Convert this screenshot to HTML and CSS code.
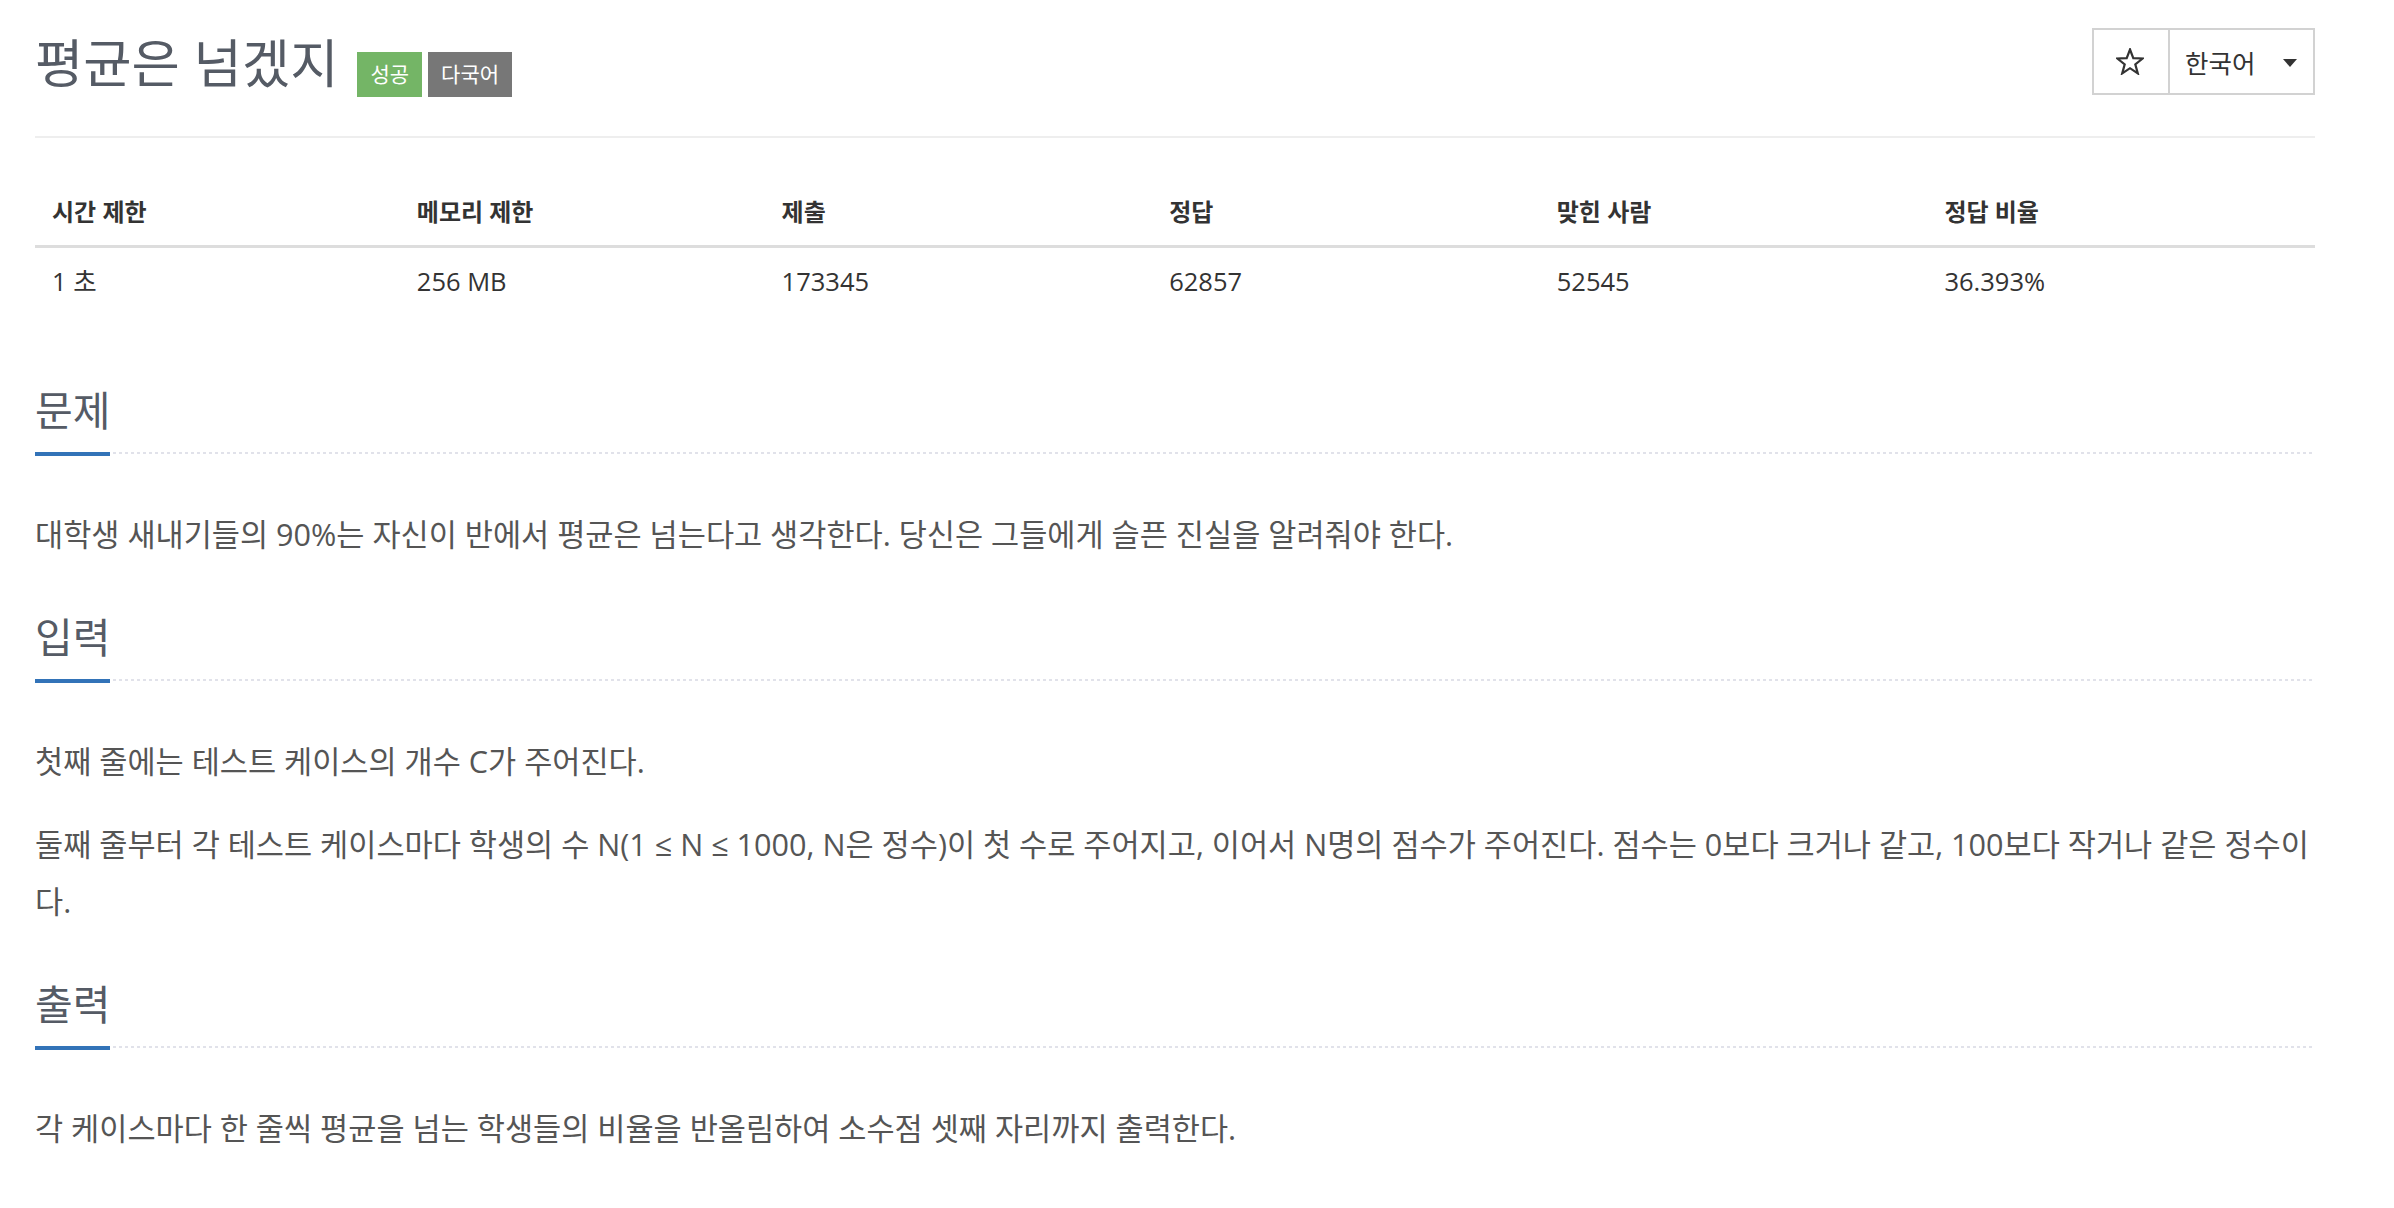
FILE: index.html
```html
<!DOCTYPE html>
<html lang="ko">
<head>
<meta charset="utf-8">
<title>평균은 넘겠지</title>
<link rel="stylesheet" href="styles.css">
</head>
<body>
<div class="page">
  <header class="page-header">
    <div class="title-row">
      <h1 class="title">평균은 넘겠지</h1>
      <span class="badge badge-success">성공</span>
      <span class="badge badge-default">다국어</span>
    </div>
    <div class="btn-group">
      <div class="btn-star">
        <svg class="star-icon" width="28" height="27" viewBox="0 0 28 27">
          <polygon points="14,1.5 17.29,10.2 26.6,10.5 19.3,16.3 21.8,25.4 14,20.2 6.2,25.4 8.7,16.3 1.4,10.5 10.71,10.2" fill="none" stroke="#333" stroke-width="2.2" stroke-linejoin="miter"/>
        </svg>
      </div>
      <div class="btn-lang">
        <span class="lang-text">한국어</span>
        <span class="caret"></span>
      </div>
    </div>
  </header>

  <table class="info">
    <colgroup>
      <col class="w16"><col class="w16"><col class="w17"><col class="w17"><col class="w17"><col class="w17">
    </colgroup>
    <thead>
      <tr>
        <th>시간 제한</th>
        <th>메모리 제한</th>
        <th>제출</th>
        <th>정답</th>
        <th>맞힌 사람</th>
        <th>정답 비율</th>
      </tr>
    </thead>
    <tbody>
      <tr>
        <td>1 초</td>
        <td>256 MB</td>
        <td>173345</td>
        <td>62857</td>
        <td>52545</td>
        <td>36.393%</td>
      </tr>
    </tbody>
  </table>

  <section class="section section-first">
    <div class="headline"><h2>문제</h2></div>
    <div class="problem-text">
      <p>대학생 새내기들의 90%는 자신이 반에서 평균은 넘는다고 생각한다. 당신은 그들에게 슬픈 진실을 알려줘야 한다.</p>
    </div>
  </section>

  <section class="section">
    <div class="headline"><h2>입력</h2></div>
    <div class="problem-text">
      <p>첫째 줄에는 테스트 케이스의 개수 C가 주어진다.</p>
      <p>둘째 줄부터 각 테스트 케이스마다 학생의 수 N(1 ≤ N ≤ 1000, N은 정수)이 첫 수로 주어지고, 이어서 N명의 점수가 주어진다. 점수는 0보다 크거나 같고, 100보다 작거나 같은 정수이다.</p>
    </div>
  </section>

  <section class="section">
    <div class="headline"><h2>출력</h2></div>
    <div class="problem-text">
      <p>각 케이스마다 한 줄씩 평균을 넘는 학생들의 비율을 반올림하여 소수점 셋째 자리까지 출력한다.</p>
    </div>
  </section>
</div>
</body>
</html>
```

FILE: styles.css
```css
html, body {
  margin: 0;
  padding: 0;
  background: #ffffff;
}

body {
  font-family: "Open Sans", "Noto Sans CJK KR", sans-serif;
  color: #555555;
}

.page {
  width: 2280px;
  margin-left: 35px;
}

/* ---------- header ---------- */
.page-header {
  display: flex;
  justify-content: space-between;
  align-items: flex-start;
  padding-top: 28px;
  height: 108px;
  border-bottom: 2px solid #eeeeee;
}

.title-row {
  display: flex;
  align-items: flex-start;
  margin-top: 4px;
}

.title {
  margin: 0 19px 0 0;
  font-size: 52.5px;
  line-height: 62px;
  font-weight: 400;
  color: #555b65;
}

.badge {
  margin-top: 20px;
  height: 45px;
  line-height: 45px;
  padding: 0 13px;
  font-size: 21px;
  color: #ffffff;
}

.badge-success {
  background: #74b566;
}

.badge-default {
  background: #777777;
  margin-left: 6px;
}

.btn-group {
  display: flex;
  width: 223px;
  height: 67px;
  box-sizing: border-box;
  border: 2px solid #d2d2d2;
  background: #ffffff;
}

.btn-star {
  width: 76px;
  box-sizing: border-box;
  border-right: 2px solid #d2d2d2;
  display: flex;
  align-items: center;
  justify-content: center;
}

.star-icon {
  display: block;
  margin-right: 2px;
}

.btn-lang {
  flex: 1;
  display: flex;
  align-items: center;
  justify-content: space-between;
  padding: 0 16px 0 15px;
  font-size: 25.5px;
  color: #333333;
}

.caret {
  width: 0;
  height: 0;
  margin-top: 3px;
  border-top: 8px solid #333333;
  border-left: 7.5px solid transparent;
  border-right: 7.5px solid transparent;
}

/* ---------- info table ---------- */
.info {
  width: 100%;
  margin-top: 41px;
  border-collapse: collapse;
  table-layout: fixed;
}

.w16 { width: 16%; }
.w17 { width: 17%; }

.info th {
  padding: 18px 17px;
  line-height: 30px;
  font-size: 24px;
  font-weight: 700;
  color: #333333;
  text-align: left;
  border-bottom: 3px solid #dddddd;
}

.info td {
  padding: 18px 17px;
  line-height: 30px;
  font-size: 25.5px;
  color: #333333;
  text-align: left;
}

/* ---------- sections ---------- */
.section {
  margin-top: 52px;
}

.section-first {
  margin-top: 74px;
}

.headline {
  display: flex;
  margin-bottom: 50px;
  background-image: linear-gradient(to right, #e1e2ea 50%, transparent 50%);
  background-size: 6px 2px;
  background-repeat: repeat-x;
  background-position: left bottom 2px;
}

.headline h2 {
  margin: 0;
  padding-bottom: 20px;
  font-size: 41px;
  line-height: 44px;
  font-weight: 400;
  color: #555b65;
  border-bottom: 4px solid #3273b8;
}

.problem-text p {
  margin: 0 0 26px;
  font-size: 30.6px;
  line-height: 57px;
  color: #555555;
}

.problem-text p:last-child {
  margin-bottom: 0;
}
```
